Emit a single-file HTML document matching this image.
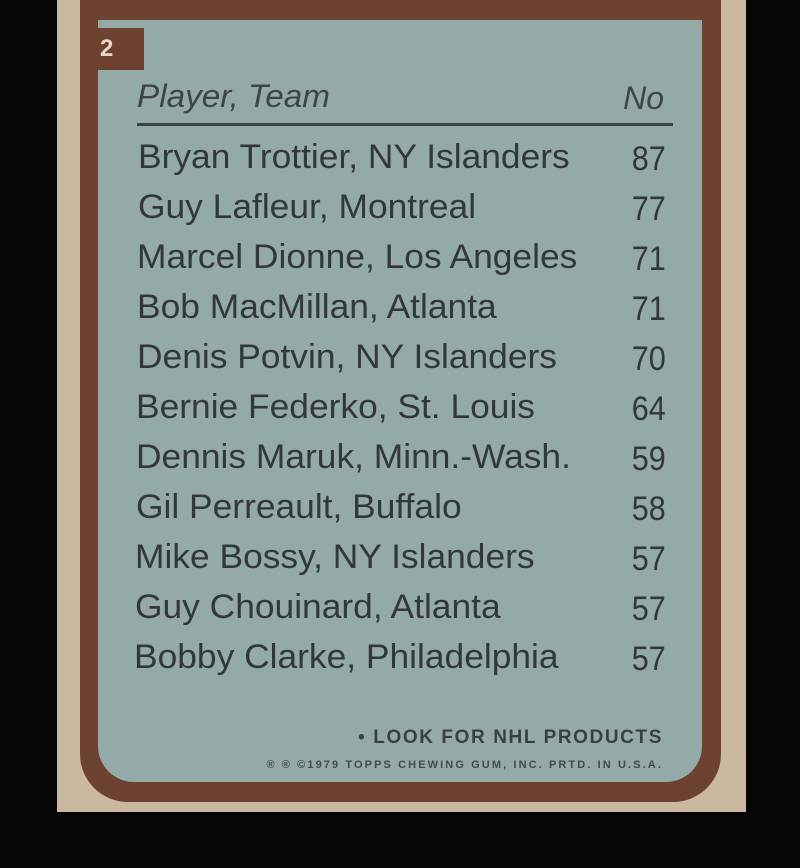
<!DOCTYPE html>
<html><head><style>
body{margin:0;background:#050505;width:800px;height:868px;overflow:hidden;position:relative;font-family:"Liberation Sans",sans-serif}
.card{position:absolute;left:57px;top:0;width:689px;height:812px;background:#cbb8a0}
.frame{position:absolute;left:80px;top:0;width:641px;height:802px;background:#6e4230;border-radius:0 0 48px 48px}
.panel{position:absolute;left:98px;top:20px;width:604px;height:762px;background:#94aaa9;border-radius:0 0 36px 36px}
.num{position:absolute;left:80px;top:28px;width:64px;height:42px;background:#6e4230;color:#e8d8c8;font-weight:bold;font-size:24px;line-height:42px;text-indent:20px}
.t{position:absolute;color:#33373a;font-size:34px;white-space:nowrap;transform-origin:left;transform:scaleX(1.04)}
.n{position:absolute;color:#33373a;font-size:34px;right:134px;transform:scaleX(0.9);transform-origin:right}
.h{font-style:italic;font-size:32px;color:#3e4448}
</style></head><body>
<div class="card"></div>
<div class="frame"></div>
<div class="panel"></div>
<div class="num">2</div>
<div class="t h" style="left:137px;top:78px">Player, Team</div>
<div class="n h" style="top:80px;right:136px;transform:none">No</div>
<div style="position:absolute;left:137px;top:123px;width:536px;height:3px;background:#3a3f42"></div>
<div class="t" style="left:138px;top:138px">Bryan Trottier, NY Islanders</div><div class="n" style="top:140px">87</div>
<div class="t" style="left:138px;top:188px">Guy Lafleur, Montreal</div><div class="n" style="top:190px">77</div>
<div class="t" style="left:137px;top:238px">Marcel Dionne, Los Angeles</div><div class="n" style="top:240px">71</div>
<div class="t" style="left:137px;top:288px">Bob MacMillan, Atlanta</div><div class="n" style="top:290px">71</div>
<div class="t" style="left:137px;top:338px">Denis Potvin, NY Islanders</div><div class="n" style="top:340px">70</div>
<div class="t" style="left:136px;top:388px">Bernie Federko, St. Louis</div><div class="n" style="top:390px">64</div>
<div class="t" style="left:136px;top:438px">Dennis Maruk, Minn.-Wash.</div><div class="n" style="top:440px">59</div>
<div class="t" style="left:136px;top:488px">Gil Perreault, Buffalo</div><div class="n" style="top:490px">58</div>
<div class="t" style="left:135px;top:538px">Mike Bossy, NY Islanders</div><div class="n" style="top:540px">57</div>
<div class="t" style="left:135px;top:588px">Guy Chouinard, Atlanta</div><div class="n" style="top:590px">57</div>
<div class="t" style="left:134px;top:638px">Bobby Clarke, Philadelphia</div><div class="n" style="top:640px">57</div>
<div style="position:absolute;right:137px;top:727px;font-weight:bold;font-size:19px;color:#3a3f42;letter-spacing:1.6px">• LOOK FOR NHL PRODUCTS</div>
<div style="position:absolute;right:137px;top:759px;font-weight:bold;font-size:11px;color:#44494c;letter-spacing:2.1px">® ® ©1979 TOPPS CHEWING GUM, INC. PRTD. IN U.S.A.</div>
</body></html>
